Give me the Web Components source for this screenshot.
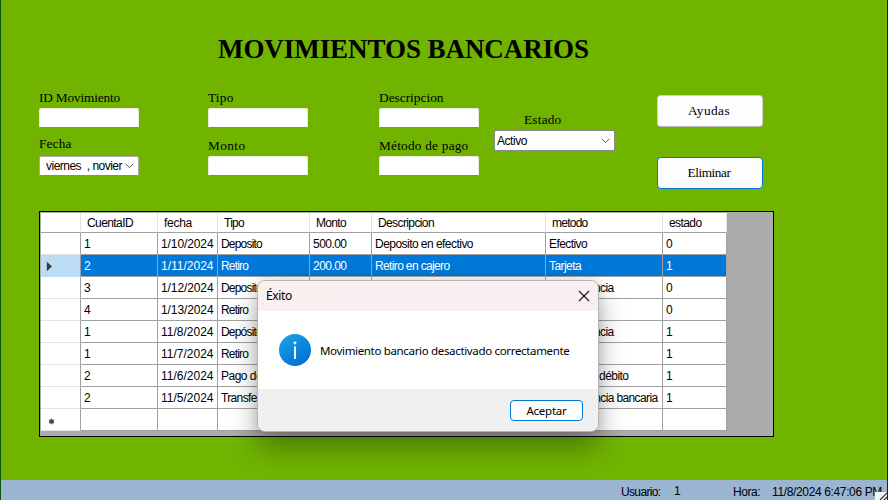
<!DOCTYPE html>
<html lang="es">
<head>
<meta charset="utf-8">
<title>Movimientos bancarios</title>
<style>
  html, body { margin: 0; width: 888px; height: 500px; overflow: hidden; }
  body { font-family: "Liberation Sans", sans-serif; font-size: 12px; color: #000; }
</style>
</head>
<body>
<bank-window></bank-window>
<script>
// Text run whose letter spacing adapts so that it fills the width "w".
class FitText extends HTMLElement {
  connectedCallback() {
    if (this.shadowRoot) return;
    const root = this.attachShadow({ mode: 'open' });
    root.innerHTML = `<style>
      :host { display: block; white-space: pre; line-height: 16px; }
      span { display: inline-block; }
    </style><span></span>`;
    const span = root.querySelector('span');
    const text = this.getAttribute('t');
    span.textContent = text;
    const w = parseFloat(this.getAttribute('w'));
    if (w) {
      const natural = span.getBoundingClientRect().width;
      span.style.letterSpacing = ((w - natural) / text.length).toFixed(3) + 'px';
    }
  }
}

class FormField extends HTMLElement {
  connectedCallback() {
    const kind = this.getAttribute('kind') || 'text';
    this.attachShadow({ mode: 'open' }).innerHTML = `<style>
      :host { display: block; }
      .label { font: 13.3px "Liberation Serif", serif; height: 18px; }
      .box { box-sizing: border-box; width: 100px; height: 20px; background: #fff; border: 1px solid #e6ebdc;
             border-bottom-color: #868686; border-radius: 2px; display: flex; align-items: center; }
      .date { border-color: #aaa; border-bottom-color: #888; padding: 0 4px 0 6px; justify-content: space-between; }
      .clip { width: 77px; overflow: hidden; }
      .combo { width: 121px; height: 21px; border: 1px solid #8a8a8a; padding: 0 4px 0 2px; justify-content: space-between; }
      svg { display: block; flex: none; }
    </style>
    <div class="label"><fit-text t="${this.getAttribute('label')}" w="${this.getAttribute('w')}"></fit-text></div>
    <div class="box ${kind}">${kind === 'text' ? '' : `<div class="clip"><fit-text t="${this.getAttribute('value')}" w="${this.getAttribute('vw')}"></fit-text></div>
      <svg width="9" height="6" viewBox="0 0 9 6"><path d="M.7.8 4.5 4.6 8.3.8" fill="none" stroke="#555"/></svg>`}</div>`;
  }
}

class PushButton extends HTMLElement {
  connectedCallback() {
    this.attachShadow({ mode: 'open' }).innerHTML = `<style>
      :host { display: flex; box-sizing: border-box; align-items: center; justify-content: center; background: #fdfdfd;
              border: 1px solid #d0d0d0; border-bottom-color: #b8b8b8; border-radius: 4px; width: 106px; height: 32px;
              font: 13.3px "Liberation Serif", serif; padding-right: 2px; }
      :host([active]) { border-color: #0078d4; }
    </style><slot></slot>`;
  }
}

class DataGrid extends HTMLElement {
  connectedCallback() {
    const cols = [['CuentaID', 46], ['fecha', 28], ['Tipo', 20], ['Monto', 30], ['Descripcion', 56], ['metodo', 35.5], ['estado', 32.5]];
    const W = { 'Deposito': 41, 'Depósito': 41, 'Retiro': 27, '500.00': 33.5, '200.00': 33.5, 'Deposito en efectivo': 98,
      'Retiro en cajero': 74.5, 'Efectivo': 38, 'Tarjeta': 32, 'Transferencia': 64.5, 'Tarjeta de débito': 79.5,
      'Transferencia bancaria': 108.5, 'Pago de servicios': 86 };
    const rows = [
      ['1', '1/10/2024', 'Deposito', '500.00', 'Deposito en efectivo', 'Efectivo', '0'],
      ['2', '1/11/2024', 'Retiro', '200.00', 'Retiro en cajero', 'Tarjeta', '1'],
      ['3', '1/12/2024', 'Deposito', '', '', 'Transferencia', '0'],
      ['4', '1/13/2024', 'Retiro', '', '', '', '0'],
      ['1', '11/8/2024', 'Depósito', '', '', 'Transferencia', '1'],
      ['1', '11/7/2024', 'Retiro', '', '', '', '1'],
      ['2', '11/6/2024', 'Pago de servicios', '', '', 'Tarjeta de débito', '1'],
      ['2', '11/5/2024', 'Transferencia', '', '', 'Transferencia bancaria', '1'],
      ['', '', '', '', '', '', '']
    ];
    const width = t => W[t] || (t.includes('/') ? 52.5 : 0);
    const text = (t, w) => t ? `<fit-text t="${t}" w="${w}"></fit-text>` : '';
    const arrow = '<svg class="mark" width="7" height="11" viewBox="0 0 7 11"><path d="M.8.8 6 5.5.8 10.2z" fill="#3a3a3a"/></svg>';
    const star = '<svg class="star" width="7" height="7" viewBox="0 0 7 7"><circle cx="3.5" cy="3.5" r="2.3" fill="#333"/><path d="M3.5.5v6M.8 2l5.4 3M.8 5l5.4-3" stroke="#555" stroke-width=".9"/></svg>';
    this.attachShadow({ mode: 'open' }).innerHTML = `<style>
      :host { display: block; box-sizing: border-box; width: 735px; height: 226px; border: 1px solid #000; background: #ababab; padding: 1px; }
      .row { display: grid; grid-template-columns: 40px 77px 60px 92px 62px 174px 117px 64px; width: 686px; height: 22px; }
      .row > div { box-sizing: border-box; background: #fff; border-right: 1px solid #a0a0a0; border-bottom: 1px solid #a0a0a0;
                   padding: 3px 0 0 3px; overflow: hidden; }
      .row > .rh { border-bottom-color: #e3e3e3; padding: 0; display: flex; align-items: center; }
      .head { height: 20px; }
      .head > div { border-right-color: #e3e3e3; padding: 2px 0 0 6px; }
      .head > .rh { border-bottom-color: #a0a0a0; }
      .sel > div { background: #0078d7; color: #fff; }
      .sel > .rh { background: #bcdcf4; border-bottom-color: #bcdcf4; }
      .mark { margin-left: 5px; margin-top: 1px; } .star { margin-left: 7px; margin-top: 3px; }
    </style>
    <div class="row head"><div class="rh"></div>${cols.map(c => `<div>${text(c[0], c[1])}</div>`).join('')}</div>
    ${rows.map((r, i) => `<div class="row${i === 1 ? ' sel' : ''}"><div class="rh">${i === 1 ? arrow : i === 8 ? star : ''}</div>${r.map(t => `<div>${text(t, width(t))}</div>`).join('')}</div>`).join('')}`;
  }
}

class MessageDialog extends HTMLElement {
  connectedCallback() {
    this.attachShadow({ mode: 'open' }).innerHTML = `<style>
      :host { display: flex; flex-direction: column; box-sizing: border-box; width: 342px; height: 152px; border-radius: 8px;
              background: #fff; border: 1px solid #b4b4b4; background-clip: padding-box; overflow: hidden;
              box-shadow: 0 16px 28px rgba(0,0,0,.32), 0 0 12px rgba(0,0,0,.12); font-family: "Noto Sans", sans-serif; }
      header { height: 30px; box-sizing: border-box; background: linear-gradient(90deg, #f9f0ef, #f9eef3);
               display: flex; align-items: center; justify-content: space-between; padding: 0 8px 0 8px; }
      main { height: 78px; display: flex; align-items: center; padding-left: 21px; gap: 9px; }
      .msg { font-size: 11.5px; padding-top: 2px; }
      footer { flex: 1; background: #f0f0f0; display: flex; justify-content: flex-end; padding: 11px 15px 0 0; }
      push-button { width: 73px; height: 21px; font: 11.5px "Noto Sans", sans-serif; padding: 0; }
      svg { display: block; }
    </style>
    <header><fit-text t="Éxito" w="26"></fit-text>
      <svg width="12" height="12" viewBox="0 0 12 12"><path d="M1 1l10 10M11 1 1 11" stroke="#111" stroke-width="1.1"/></svg></header>
    <main><svg width="32" height="32" viewBox="0 0 32 32"><defs><linearGradient id="b" x1="0" y1="0" x2=".7" y2="1"><stop stop-color="#1fa4e8"/><stop offset="1" stop-color="#0070d0"/></linearGradient></defs>
      <circle cx="16" cy="16" r="16" fill="url(#b)"/><rect x="15.1" y="12.5" width="1.9" height="12.5" fill="#fff"/><circle cx="16" cy="9" r="1.4" fill="#fff"/></svg>
      <fit-text class="msg" t="Movimiento bancario desactivado correctamente" w="249.5"></fit-text></main>
    <footer><push-button active><fit-text t="Aceptar" w="40"></fit-text></push-button></footer>`;
  }
}

class StatusBar extends HTMLElement {
  connectedCallback() {
    this.attachShadow({ mode: 'open' }).innerHTML = `<style>
      :host { display: grid; grid-template-columns: 53px 59px 39px 1fr; box-sizing: border-box; height: 20px; background: #9ab4d1;
              padding: 4px 0 0 620px; overflow: hidden; position: relative; }
      .up { margin-top: -1px; }
      svg { position: absolute; right: 0; bottom: 0; }
    </style>
    <fit-text t="Usuario:" w="39.5"></fit-text><fit-text class="up" t="1"></fit-text>
    <fit-text t="Hora:" w="27"></fit-text><fit-text t="11/8/2024 6:47:06 PM" w="110"></fit-text>
    <svg width="12" height="8" viewBox="0 0 12 8"><rect width="12" height="8" fill="#f5f5f5"/><path d="M5 8l7-7M9 8l3-3" stroke="#333" stroke-width="1.2"/></svg>`;
  }
}

class BankWindow extends HTMLElement {
  connectedCallback() {
    this.attachShadow({ mode: 'open' }).innerHTML = `<style>
      :host { display: flex; flex-direction: column; box-sizing: border-box; width: 888px; height: 500px; background: #70b400;
              border-left: 1px solid #08560c; border-right: 1px solid #142818; position: relative; }
      h1 { margin: 0; padding: 33px 0 0 217px; height: 90px; box-sizing: border-box; font: bold 27px "Liberation Serif", serif; }
      h1 fit-text { line-height: 32px; }
      .form { display: grid; grid-template-columns: 169px 171px 115px 163px 106px; padding-left: 38px; height: 121px; box-sizing: border-box; }
      .col { display: flex; flex-direction: column; gap: 10px; }
      .date { margin-top: -2px; }
      .state { padding-top: 22px; }
      .buttons { padding-top: 5px; gap: 30px; }
      data-grid { margin-left: 38px; }
      .fill { flex: 1; }
      message-dialog { position: absolute; left: 256px; top: 280px; }
    </style>
    <h1><fit-text t="MOVIMIENTOS BANCARIOS" w="371"></fit-text></h1>
    <div class="form">
      <div class="col"><form-field label="ID Movimiento" w="81"></form-field><form-field class="date" kind="date" label="Fecha" w="32.5" value="viernes  , novier" vw="76"></form-field></div>
      <div class="col"><form-field label="Tipo" w="25.5"></form-field><form-field label="Monto" w="37.5"></form-field></div>
      <div class="col"><form-field label="Descripcion" w="64.5"></form-field><form-field label="Método de pago" w="89.5"></form-field></div>
      <div class="col state"><form-field class="combo" kind="combo" label="Estado" w="37.5" value="Activo" vw="30"></form-field></div>
      <div class="col buttons"><push-button><fit-text t="Ayudas" w="42"></fit-text></push-button><push-button active><fit-text t="Eliminar" w="43"></fit-text></push-button></div>
    </div>
    <data-grid></data-grid>
    <div class="fill"></div>
    <status-bar></status-bar>
    <message-dialog></message-dialog>`;
    const q = s => this.shadowRoot.querySelector(s).shadowRoot.querySelector('.label');
    q('.date').style.height = '20px';
    q('.combo').style.paddingLeft = '30px';
  }
}

customElements.define('fit-text', FitText);
customElements.define('form-field', FormField);
customElements.define('push-button', PushButton);
customElements.define('data-grid', DataGrid);
customElements.define('message-dialog', MessageDialog);
customElements.define('status-bar', StatusBar);
customElements.define('bank-window', BankWindow);
</script>
</body>
</html>
